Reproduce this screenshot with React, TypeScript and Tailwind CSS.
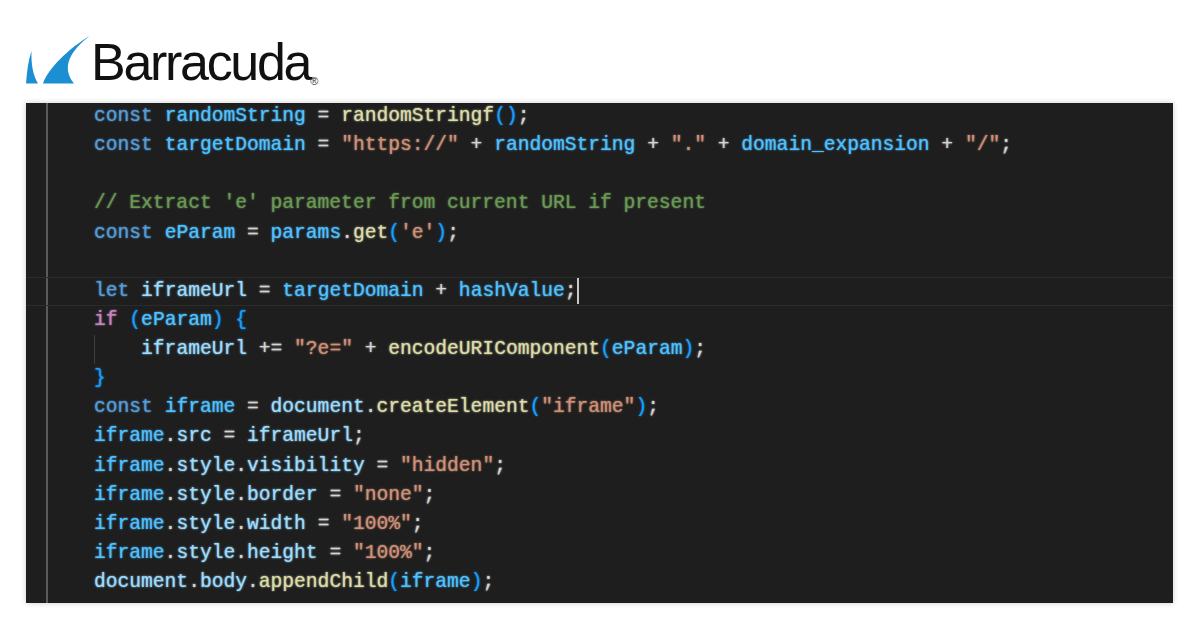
import React from "react";

type Token = [string, string];

const KW = "text-[#569cd6]";
const CONST = "text-[#4fc1ff]";
const VAR = "text-[#9cdcfe]";
const FN = "text-[#dcdcaa]";
const STR = "text-[#ce9178]";
const OP = "text-[#d4d4d4]";
const CMT = "text-[#6a9955]";
const CTRL = "text-[#c586c0]";
const BR = "text-[#179fff]";

const lines: Token[][] = [
  [[KW, "const"], [OP, " "], [CONST, "randomString"], [OP, " = "], [FN, "randomStringf"], [BR, "()"], [OP, ";"]],
  [[KW, "const"], [OP, " "], [CONST, "targetDomain"], [OP, " = "], [STR, '"https://"'], [OP, " + "], [CONST, "randomString"], [OP, " + "], [STR, '"."'], [OP, " + "], [CONST, "domain_expansion"], [OP, " + "], [STR, '"/"'], [OP, ";"]],
  [],
  [[CMT, "// Extract 'e' parameter from current URL if present"]],
  [[KW, "const"], [OP, " "], [CONST, "eParam"], [OP, " = "], [CONST, "params"], [OP, "."], [FN, "get"], [BR, "("], [STR, "'e'"], [BR, ")"], [OP, ";"]],
  [],
  [[KW, "let"], [OP, " "], [VAR, "iframeUrl"], [OP, " = "], [CONST, "targetDomain"], [OP, " + "], [CONST, "hashValue"], [OP, ";"]],
  [[CTRL, "if"], [OP, " "], [BR, "("], [CONST, "eParam"], [BR, ")"], [OP, " "], [BR, "{"]],
  [[OP, "    "], [VAR, "iframeUrl"], [OP, " += "], [STR, '"?e="'], [OP, " + "], [FN, "encodeURIComponent"], [BR, "("], [CONST, "eParam"], [BR, ")"], [OP, ";"]],
  [[BR, "}"]],
  [[KW, "const"], [OP, " "], [CONST, "iframe"], [OP, " = "], [VAR, "document"], [OP, "."], [FN, "createElement"], [BR, "("], [STR, '"iframe"'], [BR, ")"], [OP, ";"]],
  [[CONST, "iframe"], [OP, "."], [VAR, "src"], [OP, " = "], [VAR, "iframeUrl"], [OP, ";"]],
  [[CONST, "iframe"], [OP, "."], [VAR, "style"], [OP, "."], [VAR, "visibility"], [OP, " = "], [STR, '"hidden"'], [OP, ";"]],
  [[CONST, "iframe"], [OP, "."], [VAR, "style"], [OP, "."], [VAR, "border"], [OP, " = "], [STR, '"none"'], [OP, ";"]],
  [[CONST, "iframe"], [OP, "."], [VAR, "style"], [OP, "."], [VAR, "width"], [OP, " = "], [STR, '"100%"'], [OP, ";"]],
  [[CONST, "iframe"], [OP, "."], [VAR, "style"], [OP, "."], [VAR, "height"], [OP, " = "], [STR, '"100%"'], [OP, ";"]],
  [[VAR, "document"], [OP, "."], [VAR, "body"], [OP, "."], [FN, "appendChild"], [BR, "("], [CONST, "iframe"], [BR, ")"], [OP, ";"]],
];

const Logo = () => (
  <div className="flex items-end h-[103px] pl-[26px] pb-[19px]">
    <svg width="64" height="48" viewBox="0 0 64 48" className="shrink-0">
      <path d="M17 47.5 C22 33 42 13 63.5 0 C46 14 34 30 48 47.5 Z" fill="#1b8fd2" />
      <path d="M0 47.5 C1 36 2 25 5.5 15 C5 28 7 39 12 47.5 Z" fill="#1b8fd2" />
    </svg>
    <span className="ml-[1px] -mb-[1px] text-[52px] leading-[46px] tracking-[-2.3px] text-[#111] font-['Liberation_Sans',Arial,sans-serif]">
      Barracuda
    </span>
    <span className="-mb-[3px] text-[11px] leading-[11px] text-[#333] font-['Liberation_Sans',Arial,sans-serif]">®</span>
  </div>
);

const CodeLine = ({ tokens, active, guide }: { tokens: Token[]; active?: boolean; guide?: boolean }) => (
  <div className={active ? "flex h-[29.125px] shrink-0 border-y border-[#2b2b2b]" : "flex h-[29.125px] shrink-0"}>
    <div className="w-[22px] shrink-0 border-r-2 border-[#5a5a5a]" />
    <div className={active ? "relative pl-[46px] whitespace-pre leading-[27.125px]" : "relative pl-[46px] whitespace-pre leading-[29.125px]"}>
      {guide && <div className="absolute left-[46px] top-0 bottom-0 w-px bg-[#404040]" />}
      {tokens.map(([cls, text], i) => (
        <span key={i} className={cls}>{text}</span>
      ))}
      {active && <span className="inline-block w-[2px] h-[26px] align-top bg-[#c8c8c8]" />}
    </div>
  </div>
);

export default function App() {
  return (
    <div className="w-[1200px] h-[628px] bg-white overflow-hidden">
      <Logo />
      <div className="ml-[26px] w-[1147px] h-[500px] bg-[#1e1e1e] overflow-hidden flex flex-col shadow-[0_0_6px_rgba(0,0,0,0.2)] text-[19.63px] [text-shadow:0_0_2px_currentColor] font-['Liberation_Mono','DejaVu_Sans_Mono',monospace]">
        <div className="h-[0px] -mt-[1px]" />
        {lines.map((tokens, i) => (
          <CodeLine key={i} tokens={tokens} active={i === 6} guide={i === 8} />
        ))}
        <div className="flex flex-1">
          <div className="w-[22px] shrink-0 border-r-2 border-[#5a5a5a]" />
        </div>
      </div>
    </div>
  );
}
